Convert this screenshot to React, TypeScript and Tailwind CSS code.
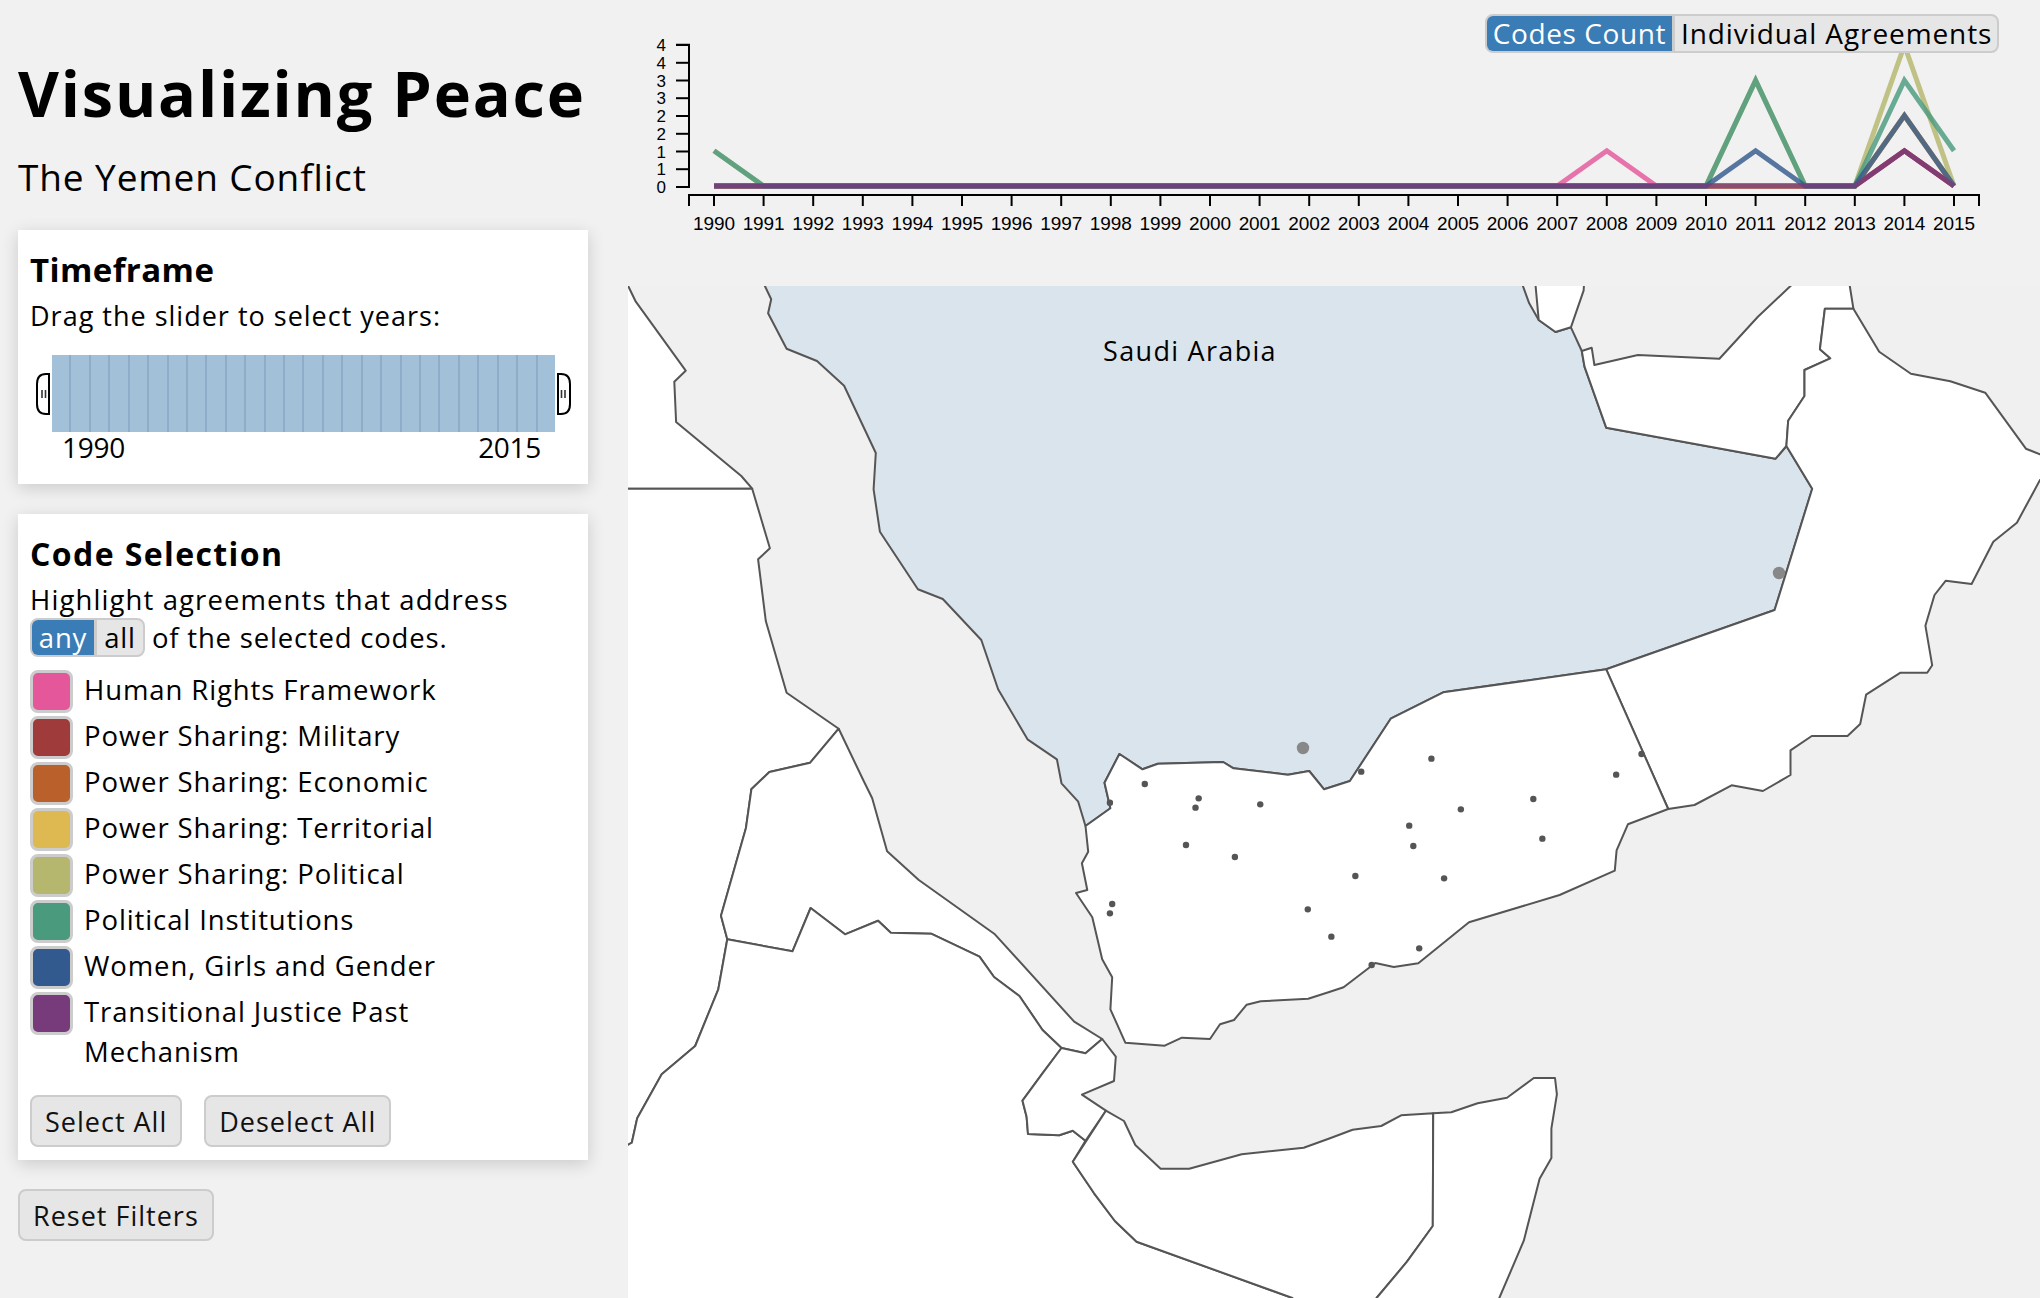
import React from "react";

type Pt = [number, number];
const tile = (ox: number, oy: number) => (pts: Pt[]): Pt[] => pts.map(([x, y]) => [ox + x / 2.2085, oy + y / 3] as Pt);
const z5 = tile(620, 270);
const z6 = tile(1330, 270);
const z7 = tile(620, 780);
const z8 = tile(1330, 780);
const str = (pts: Pt[]) => pts.map((p) => p[0].toFixed(1) + "," + p[1].toFixed(1)).join(" ");

const yemenTop: Pt[] = [
  ...z5([[1070, 1538], [1103, 1452], [1154, 1498], [1188, 1481], [1332, 1476], [1355, 1495], [1475, 1514], [1522, 1503], [1555, 1558]]),
  ...z6([[44, 1533], [134, 1346], [250, 1267], [610, 1198]]),
];

const lands: { pts: Pt[]; fill: string }[] = [
  { fill: "#ffffff", pts: z5([[-50, 20], [8, 20], [18, 48], [35, 95], [145, 302], [120, 335], [124, 456], [268, 618], [292, 656], [-50, 656]]) },
  {
    fill: "#ffffff",
    pts: [
      ...z5([[-50, 656], [292, 656], [331, 835], [305, 868], [322, 1053], [368, 1268], [483, 1376], [420, 1478], [330, 1506], [290, 1558]]),
      ...z7([[290, 30], [278, 145], [223, 407], [237, 478], [217, 628], [166, 798], [92, 883], [38, 1015], [26, 1088], [18, 1094], [-50, 1150]]),
    ],
  },
  {
    fill: "#ffffff",
    pts: [
      ...z5([[483, 1376]]),
      ...z7([[537, 0], [557, 55], [590, 214], [660, 300], [828, 463], [1003, 725], [1065, 777], [1028, 820], [975, 804], [933, 750], [882, 648], [826, 591], [794, 530], [687, 461], [598, 458], [570, 422], [497, 463], [421, 384], [381, 514], [237, 478], [223, 407], [278, 145], [290, 30]]),
      ...z5([[290, 1558], [330, 1506], [420, 1478]]),
    ],
  },
  {
    fill: "#ffffff",
    pts: z7([[-50, 1150], [18, 1094], [26, 1088], [38, 1015], [92, 883], [166, 798], [217, 628], [237, 478], [381, 514], [421, 384], [497, 463], [570, 422], [598, 458], [687, 461], [794, 530], [826, 591], [882, 648], [933, 750], [975, 804], [933, 880], [889, 962], [898, 1010], [901, 1062], [970, 1066], [1000, 1052], [1028, 1082], [1000, 1145], [1047, 1240], [1093, 1323], [1141, 1385], [1485, 1554], [1485, 1620], [-50, 1620]]),
  },
  {
    fill: "#ffffff",
    pts: z7([[975, 804], [1028, 820], [1065, 777], [1095, 830], [1091, 903], [1020, 944], [1073, 992], [1028, 1082], [1000, 1052], [970, 1066], [901, 1062], [898, 1010], [889, 962], [933, 880]]),
  },
  {
    fill: "#ffffff",
    pts: [
      ...z7([[1073, 992], [1113, 1023], [1138, 1095], [1194, 1166], [1257, 1166], [1373, 1123], [1510, 1103]]),
      ...z8([[0, 1075], [50, 1049], [113, 1038], [157, 1006], [228, 1000], [227, 1338], [170, 1445], [103, 1554], [103, 1620]]),
      ...z7([[1485, 1620], [1485, 1554], [1141, 1385], [1093, 1323], [1047, 1240], [1000, 1145]]),
    ],
  },
  {
    fill: "#ffffff",
    pts: z8([[228, 1000], [268, 997], [326, 970], [391, 953], [450, 894], [497, 894], [501, 943], [489, 1045], [489, 1134], [463, 1196], [428, 1382], [374, 1554], [374, 1620], [103, 1620], [103, 1554], [170, 1445], [227, 1338]]),
  },
  {
    fill: "#dae4ec",
    pts: [
      ...z5([[312, 20], [320, 48], [334, 88], [327, 130], [368, 236], [435, 273], [495, 347], [565, 549], [560, 658], [574, 785], [658, 958], [713, 987], [798, 1110], [835, 1258], [900, 1408], [965, 1468], [975, 1540]]),
      ...z7([[1012, 65], [1028, 138], [1083, 85]]),
      ...yemenTop,
      ...z6([[982, 1020], [1065, 656], [1008, 528], [984, 566], [610, 473], [562, 290], [556, 243], [532, 172], [498, 186], [461, 150], [440, 100], [426, 48], [418, 20]]),
    ],
  },
  { fill: "#ffffff", pts: z6([[454, 20], [454, 48], [461, 150], [498, 186], [532, 172], [560, 62], [562, 20]]) },
  {
    fill: "#ffffff",
    pts: z6([[556, 243], [578, 233], [584, 285], [680, 255], [860, 266], [945, 140], [1017, 48], [1040, 20], [1145, 20], [1148, 48], [1156, 116], [1093, 116], [1082, 238], [1105, 265], [1048, 300], [1048, 378], [1012, 452], [1008, 528], [984, 566], [610, 473], [562, 290]]),
  },
  {
    fill: "#ffffff",
    pts: [
      ...z6([[1156, 116], [1213, 245], [1283, 311], [1370, 334], [1447, 368], [1537, 536], [1568, 553], [1620, 580], [1620, 600], [1568, 630], [1517, 758], [1465, 815], [1417, 942], [1360, 932], [1335, 975], [1315, 1067], [1330, 1186], [1319, 1208], [1260, 1208], [1184, 1274], [1171, 1362], [1143, 1398], [1064, 1398], [1017, 1441], [1017, 1515]]),
      ...z8([[956, 33], [887, 16], [805, 75], [747, 87]]),
      ...z6([[610, 1198], [982, 1020], [1065, 656], [1008, 528], [1012, 452], [1048, 378], [1048, 300], [1105, 265], [1082, 238], [1093, 116]]),
    ],
  },
  {
    fill: "#ffffff",
    pts: [
      ...z8([[747, 87], [658, 133], [633, 211], [629, 272], [507, 345], [307, 427], [195, 550], [141, 561], [100, 549], [30, 622], [0, 635]]),
      ...z7([[1520, 656], [1415, 664], [1384, 674], [1356, 720], [1325, 733], [1303, 777], [1241, 773], [1203, 797], [1116, 788], [1083, 688], [1087, 592], [1065, 538], [1043, 412], [1007, 339], [1032, 330], [1020, 250], [1034, 215], [1028, 138], [1083, 85]]),
      ...yemenTop,
    ],
  },
];

const dots: Pt[] = [
  ...z7([[1159, 12], [1278, 55], [1271, 83], [1414, 73], [1082, 68], [1250, 195], [1358, 231], [1087, 372], [1082, 400], [1519, 388]]),
  ...z8([[3, 470], [449, 57], [289, 88], [175, 137], [184, 198], [469, 176], [56, 288], [252, 295], [197, 505], [92, 555]]),
  ...z6([[224, 1466], [69, 1505], [688, 1452], [632, 1514]]),
];

const years = Array.from({ length: 26 }, (_, i) => 1990 + i);
const xOf = (year: number) => 714 - 640 + (year - 1990) * 49.6;
const yOf = (v: number) => 186 - 35.2 * v;
const series: { color: string; vals: Record<number, number> }[] = [
  { color: "#e4579b", vals: { 2008: 1, 2014: 1 } },
  { color: "#9f3b3b", vals: { 2014: 1 } },
  { color: "#b9602b", vals: { 2014: 2 } },
  { color: "#deb851", vals: { 2014: 2 } },
  { color: "#b4b76d", vals: { 1990: 1, 2011: 3, 2014: 4 } },
  { color: "#4a9a7e", vals: { 1990: 1, 2011: 3, 2014: 3, 2015: 1 } },
  { color: "#335a8e", vals: { 2011: 1, 2014: 2 } },
  { color: "#773a7a", vals: { 2014: 1 } },
];
const yTicks = [
  [45, "4"], [62.8, "4"], [80.5, "3"], [98.2, "3"], [116, "2"], [133.8, "2"], [151.5, "1"], [169.2, "1"], [187, "0"],
] as [number, string][];

const codes = [
  ["#e4579b", "Human Rights Framework"],
  ["#9f3b3b", "Power Sharing: Military"],
  ["#b9602b", "Power Sharing: Economic"],
  ["#deb851", "Power Sharing: Territorial"],
  ["#b4b76d", "Power Sharing: Political"],
  ["#4a9a7e", "Political Institutions"],
  ["#335a8e", "Women, Girls and Gender"],
  ["#773a7a", "Transitional Justice Past Mechanism"],
];

function Handle({ flip }: { flip?: boolean }) {
  return (
    <svg width="14" height="42" viewBox="0 0 14 42" className={flip ? "shrink-0 -scale-x-100" : "shrink-0"}>
      <path d="M13 1 H10 Q1 1 1 11 V31 Q1 41 10 41 H13 Z" fill="#fff" stroke="#000" strokeWidth="2" />
      <path d="M6 17 V25 M9.5 17 V25" stroke="#333" strokeWidth="1.6" fill="none" />
    </svg>
  );
}

function Btn({ children }: { children: React.ReactNode }) {
  return (
    <button className="h-[52px] rounded-lg border-2 border-[#cccccc] bg-[#e6e6e6] px-[13px] text-[27px] leading-none tracking-[1px] text-[#111]">
      {children}
    </button>
  );
}

export default function App() {
  return (
    <div className="flex h-[1298px] w-[2040px] overflow-hidden bg-[#f1f1f1] font-['Open_Sans',sans-serif] text-black">
      <aside className="w-[628px] shrink-0 pl-[18px]">
        <h1 className="mt-[51px] whitespace-nowrap text-[63px] font-bold leading-[84px] tracking-[1.8px]">Visualizing Peace</h1>
        <h2 className="mt-[20px] whitespace-nowrap text-[37px] font-normal leading-[44px] tracking-[0.9px]">The Yemen Conflict</h2>

        <section className="mt-[31px] h-[254px] w-[570px] bg-white px-[12px] pt-[17px] shadow-[0_4px_16px_rgba(0,0,0,0.16)]">
          <h3 className="text-[33px] font-bold leading-[46px] tracking-[0.4px]">Timeframe</h3>
          <p className="mt-[1px] text-[27px] leading-[44px] tracking-[1px]">Drag the slider to select years:</p>
          <div className="ml-[6px] mt-[17px] flex h-[77px] items-center">
            <Handle />
            <div className="mx-[2px] flex h-[77px] w-[503px] bg-[#a3c0d9]">
              {years.map((y) => (
                <div key={y} className="flex-1 border-l-2 border-[#8fadc8] first:border-l-0" />
              ))}
            </div>
            <Handle flip />
          </div>
          <div className="-mt-[2px] ml-[32px] mr-[35px] flex justify-between text-[28px] leading-[34px] tracking-[-0.3px]">
            <span>1990</span>
            <span>2015</span>
          </div>
        </section>

        <section className="mt-[30px] h-[646px] w-[570px] bg-white px-[12px] pt-[18px] shadow-[0_4px_16px_rgba(0,0,0,0.16)]">
          <h3 className="text-[32px] font-bold leading-[44px] tracking-[1.4px]">Code Selection</h3>
          <p className="mt-[5px] whitespace-nowrap text-[27.5px] leading-[37px] tracking-[1.1px]">Highlight agreements that address</p>
          <div className="flex h-[39px] items-center whitespace-nowrap text-[27.5px] tracking-[0.8px]">
            <span className="flex h-[39px] overflow-hidden rounded-lg border-2 border-[#cccccc] bg-[#e6e6e6] leading-[35px]">
              <span className="w-[62px] bg-[#3a7cb5] text-center text-white">any</span>
              <span className="w-[49px] border-l-[3px] border-[#cccccc] text-center">all</span>
            </span>
            <span className="ml-[7px]">of the selected codes.</span>
          </div>
          <ul className="mt-[13px]">
            {codes.map(([color, label]) => (
              <li key={label} className="mb-[3px] flex">
                <span className="h-[43px] w-[43px] shrink-0 rounded-lg border-[3px] border-[#cccccc]" style={{ backgroundColor: color }} />
                <span className="ml-[11px] w-[400px] text-[27.5px] leading-[40px] tracking-[0.9px]">{label}</span>
              </li>
            ))}
          </ul>
          <div className="mt-[23px] flex gap-[22px]">
            <Btn>Select All</Btn>
            <Btn>Deselect All</Btn>
          </div>
        </section>

        <div className="mt-[29px]">
          <Btn>Reset Filters</Btn>
        </div>
      </aside>

      <main className="flex w-[1412px] shrink-0 flex-col">
        <div className="relative h-[286px]">
          <svg width="1400" height="286" viewBox="628 0 1400 286" className="block font-['Liberation_Sans',sans-serif]">
            <g transform="translate(640 0)">
              <path d="M36 44.7 H49 V187 H36" fill="none" stroke="#000" strokeWidth="2" />
              {yTicks.map(([y, t], i) => (
                <g key={i}>
                  <line x1="36" x2="49" y1={y} y2={y} stroke="#000" strokeWidth="2" />
                  <text x="26" y={y + 6} textAnchor="end" fontSize="17">{t}</text>
                </g>
              ))}
              <path d="M49 206 V195 H1339 V206" fill="none" stroke="#000" strokeWidth="2" />
              {years.map((y) => (
                <g key={y}>
                  <line x1={xOf(y)} x2={xOf(y)} y1="195" y2="206" stroke="#000" strokeWidth="2" />
                  <text x={xOf(y)} y="230" textAnchor="middle" fontSize="19" letterSpacing="-0.1">{y}</text>
                </g>
              ))}
              {series.map((s) => (
                <polyline
                  key={s.color}
                  points={years.map((y) => xOf(y) + "," + yOf(s.vals[y] ?? 0)).join(" ")}
                  fill="none"
                  stroke={s.color}
                  strokeWidth="5"
                  strokeOpacity="0.82"
                />
              ))}
            </g>
          </svg>
          <div className="absolute left-[857px] top-[14px] flex h-[39px] w-[514px] overflow-hidden rounded-lg border-2 border-[#cccccc] bg-[#e6e6e6] text-[28px] leading-[35px]">
            <span className="w-[185px] whitespace-nowrap bg-[#3a7cb5] text-center tracking-[0.6px] text-white">Codes Count</span>
            <span className="flex-1 whitespace-nowrap border-l-[3px] border-[#cccccc] pl-[6px] tracking-[0.9px]">Individual Agreements</span>
          </div>
        </div>

        <svg width="1412" height="1012" viewBox="628 286 1412 1012" className="block">
          <rect x="628" y="286" width="1412" height="1012" fill="#f0f0f0" />
          {lands.map((l, i) => (
            <polygon key={i} points={str(l.pts)} fill={l.fill} stroke="#555" strokeWidth="2" strokeLinejoin="round" />
          ))}
          <text x="1190" y="361" textAnchor="middle" fontSize="27" letterSpacing="1.3" fill="#000">Saudi Arabia</text>
          {dots.map((d, i) => (
            <circle key={i} cx={d[0]} cy={d[1]} r="3.2" fill="#555" />
          ))}
          <circle cx="1303" cy="748" r="6.2" fill="#888" />
          <circle cx="1779" cy="573" r="6.2" fill="#888" />
        </svg>
      </main>
    </div>
  );
}
